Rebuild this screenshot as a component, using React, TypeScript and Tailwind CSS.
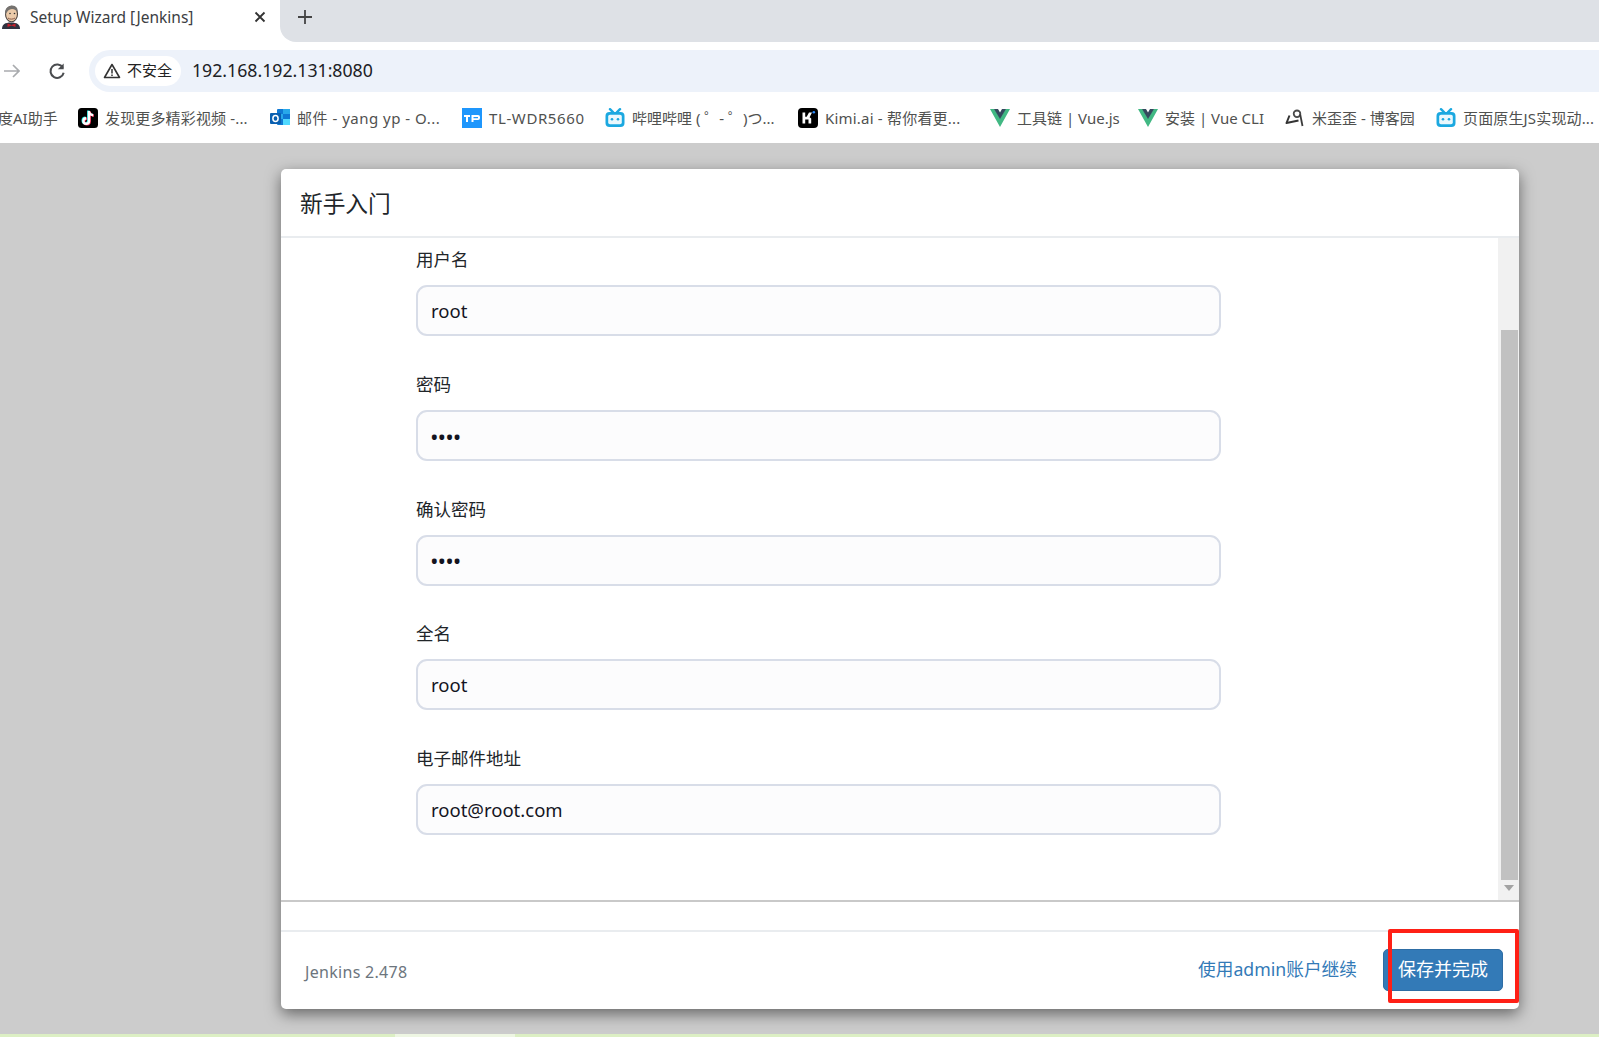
import React from "react";

const FONT = '"Noto Sans", "Noto Sans CJK SC", sans-serif';

function JenkinsIcon() {
  return (
    <svg width="20" height="24" viewBox="0 0 20 24">
      <path d="M1 24c0-4.500 3-6.500 9-6.500s9 2 9 6.500z" fill="#2f3340" />
      <ellipse cx="10.500" cy="9" rx="6" ry="7.800" fill="#eccbaa" stroke="#4f4540" strokeWidth="1.100" />
      <path d="M4.500 10C3 4 7 .5 11 .5s6.500 3 5.500 7c-1-2-3-3.500-5.500-3.500C8 4 6 6 4.500 10z" fill="#75726f" />
      <circle cx="9" cy="8.500" r=".8" fill="#333" />
      <circle cx="13.500" cy="8.500" r=".8" fill="#333" />
      <path d="M7 13c1.500 1.500 5 1.500 7 0" fill="none" stroke="#8a5a48" strokeWidth="1" />
      <path d="M6.500 18.500l4 1.500 4-1.500v3.500l-4-1.500-4 1.500z" fill="#c8202a" />
    </svg>
  );
}

function TikTok() {
  const d = "M11 3v10a2.800 2.800 0 1 1-2.800-2.800M11 3c.2 2.400 1.800 4 4.200 4.200";
  return (
    <svg width="20" height="20" viewBox="0 0 20 20">
      <rect width="20" height="20" rx="3.500" fill="#000" />
      <path d={d} fill="none" stroke="#25f4ee" strokeWidth="2.400" transform="translate(-.7 -.5)" />
      <path d={d} fill="none" stroke="#fe2c55" strokeWidth="2.400" transform="translate(.7 .5)" />
      <path d={d} fill="none" stroke="#fff" strokeWidth="2.400" />
    </svg>
  );
}

function Outlook() {
  return (
    <svg width="20" height="20" viewBox="0 0 20 20">
      <rect x="7" y="1" width="13" height="16" rx="1" fill="#0f78d4" />
      <rect x="13" y="1" width="7" height="5" fill="#28a8ea" />
      <rect x="7" y="6" width="6" height="5" fill="#28a8ea" />
      <rect x="13" y="11" width="7" height="6" fill="#50d9ff" />
      <rect x="0" y="5" width="11" height="11" rx="1" fill="#0a5fb0" />
      <ellipse cx="5.500" cy="10.500" rx="2.600" ry="3" fill="none" stroke="#fff" strokeWidth="1.500" />
    </svg>
  );
}

function TP() {
  return (
    <svg width="20" height="20" viewBox="0 0 20 20">
      <rect width="20" height="20" fill="#1e96fc" />
      <path d="M2 7h6v2H6v5H4V9H2zM9.500 7H16a2 2 0 0 1 2 2v1a2 2 0 0 1-2 2h-4.500v2h-2zm2 2v1.300H16V9z" fill="#fff" />
    </svg>
  );
}

function Bili() {
  return (
    <svg width="20" height="20" viewBox="0 0 20 20">
      <path d="M5 1.200l3.200 3.200M15 1.200l-3.200 3.200" stroke="#1ba8e0" strokeWidth="2.400" strokeLinecap="round" />
      <rect x=".5" y="4" width="19" height="15" rx="4" fill="#1ba8e0" />
      <rect x="3.200" y="6.800" width="13.600" height="9.400" rx="1.800" fill="#eaf8fd" />
      <circle cx="7" cy="11.200" r="1.300" fill="#1ba8e0" />
      <circle cx="13" cy="11.200" r="1.300" fill="#1ba8e0" />
    </svg>
  );
}

function Kimi() {
  return (
    <svg width="20" height="20" viewBox="0 0 20 20">
      <rect width="20" height="20" rx="4" fill="#000" />
      <path d="M4.500 4.500v11h2.700v-4h3.300v4h2.700v-5l-1.600-1.300L14 4.500h-3l-2.300 4.300H7.200V4.500z" fill="#fff" />
      <circle cx="15.800" cy="4.200" r="1.300" fill="#2a8cff" />
    </svg>
  );
}

function Vue() {
  return (
    <svg width="20" height="18" viewBox="0 0 20 18">
      <path d="M0 0h4.500L10 9l5.500-9H20L10 18z" fill="#41b883" />
      <path d="M4 0h4l2 3.500L12 0h4l-6 10z" fill="#35495e" />
    </svg>
  );
}

function Mi() {
  return (
    <svg width="20" height="20" viewBox="0 0 20 20" fill="none">
      <circle cx="12" cy="5.800" r="3.300" stroke="#4a4a4a" strokeWidth="1.800" />
      <path d="M15.200 6.500L17.500 18" stroke="#3a3a3a" strokeWidth="1.800" />
      <path d="M4.500 7.500L1.500 15 13.500 12.500" stroke="#333" strokeWidth="2" strokeLinejoin="round" />
    </svg>
  );
}

const bookmarks: { icon: React.ReactNode; text: string; w: string; cls: string }[] = [
  { icon: <TikTok />, text: "发现更多精彩视频 -...", w: "w-[192px]", cls: "tracking-[0.15px]" },
  { icon: <Outlook />, text: "邮件 - yang yp - O...", w: "w-[192px]", cls: "tracking-[0.5px]" },
  { icon: <TP />, text: "TL-WDR5660", w: "w-[143px]", cls: "tracking-[0.6px]" },
  { icon: <Bili />, text: "哔哩哔哩 ( ゜- ゜)つ...", w: "w-[193px]", cls: "" },
  { icon: <Kimi />, text: "Kimi.ai - 帮你看更...", w: "w-[192px]", cls: "tracking-[0.2px]" },
  { icon: <Vue />, text: "工具链 | Vue.js", w: "w-[148px]", cls: "" },
  { icon: <Vue />, text: "安装 | Vue CLI", w: "w-[147px]", cls: "" },
  { icon: <Mi />, text: "米歪歪 - 博客园", w: "w-[151px]", cls: "" },
  { icon: <Bili />, text: "页面原生JS实现动...", w: "w-[170px]", cls: "tracking-[0.15px]" },
];

function Field({ label, value, dots }: { label: string; value: string; dots?: boolean }) {
  return (
    <div className="h-[124.75px] w-[805px]">
      <div className="h-[43px] box-content pt-[9px] text-[17.5px] leading-[24px] text-[#212529]">{label}</div>
      <div className="-mt-[5px] h-[51px] rounded-[11px] border-2 border-[#d8dde8] bg-[#fcfcfd] px-[13px] flex items-center text-[18.5px] text-[#14141f]">
        {dots ? <span className="text-[17.5px] font-bold leading-none mt-[4px] tracking-[1px]">{value}</span> : value}
      </div>
    </div>
  );
}

export default function App() {
  return (
    <div className="relative w-[1599px] h-[1037px] overflow-hidden flex flex-col bg-white" style={{ fontFamily: FONT }}>
      {/* tab strip */}
      <div className="h-[42px] shrink-0 flex bg-white">
        <div className="w-[280px] shrink-0 flex items-center pl-[1px] pb-[8px] text-[#3c4043]">
          <JenkinsIcon />
          <span className="ml-[9px] mt-[1px] text-[15.5px] whitespace-nowrap">Setup Wizard [Jenkins]</span>
          <svg width="12" height="12" viewBox="0 0 12 12" className="ml-auto mr-[14px]">
            <path d="M1.500 1.500l9 9M10.500 1.500l-9 9" stroke="#333" strokeWidth="1.800" />
          </svg>
        </div>
        <div className="flex-1 bg-[#dee1e6] rounded-bl-[16px] flex items-center pl-[18px] pb-[8px]">
          <svg width="14" height="14" viewBox="0 0 14 14">
            <path d="M7 0v14M0 7h14" stroke="#444" strokeWidth="1.800" />
          </svg>
        </div>
      </div>
      {/* toolbar */}
      <div className="h-[58px] shrink-0 bg-white flex items-center pb-[1px]">
        <svg width="16" height="16" viewBox="0 0 16 16" className="ml-[4px]">
          <path d="M0 8h15M9 2l6 6-6 6" fill="none" stroke="#a9abae" strokeWidth="1.700" />
        </svg>
        <svg width="20" height="20" viewBox="0 0 24 24" className="ml-[27px]">
          <path d="M19 8a8 8 0 1 0 1 6" fill="none" stroke="#4a4c4f" strokeWidth="2.400" />
          <path d="M20 3v7h-7z" fill="#4a4c4f" />
        </svg>
        <div className="ml-[22px] flex-1 h-[42px] rounded-l-[21px] bg-[#edf2fa] flex items-center pl-[6px]">
          <div className="h-[30px] w-[86px] bg-white rounded-full flex items-center pl-[8px] gap-[6px]">
            <svg width="18" height="16" viewBox="0 0 18 16">
              <path d="M9 1.500L1.500 14.500h15z" fill="none" stroke="#333" strokeWidth="1.600" strokeLinejoin="round" />
              <path d="M9 6v4.500M9 11.500v1.500" stroke="#333" strokeWidth="1.500" />
            </svg>
            <span className="text-[15px] text-[#222] whitespace-nowrap">不安全</span>
          </div>
          <span className="ml-[11px] text-[17.7px] text-[#202124] whitespace-nowrap">192.168.192.131:8080</span>
        </div>
      </div>
      {/* bookmarks */}
      <div className="h-[43px] shrink-0 bg-white flex items-center pb-[7px] text-[15px] text-[#50514f] overflow-hidden whitespace-nowrap">
        <div className="w-[78px] shrink-0 -ml-[2px] mr-[2px]">
          <span className="whitespace-nowrap">度AI助手</span>
        </div>
        {bookmarks.map((b, i) => (
          <div key={i} className={`${b.w} shrink-0 flex items-center gap-[7px]`}>
            <span className="w-[20px] h-[20px] flex items-center justify-center shrink-0">{b.icon}</span>
            <span className={b.cls}>{b.text}</span>
          </div>
        ))}
      </div>
      {/* page */}
      <div className="flex-1 min-h-0 bg-[#cccccc] pt-[26px] pl-[281px] flex flex-col">
        <div className="w-[1238px] h-[840px] shrink-0 bg-white rounded-[5px] shadow-[0_5px_15px_rgba(0,0,0,0.5)] flex flex-col overflow-hidden">
          <div className="h-[69px] shrink-0 border-b-2 border-[#e9ecef] flex items-center pl-[19px] pt-[3px] text-[22.7px] text-[#212529]">
            新手入门
          </div>
          <div className="h-[664px] shrink-0 border-b-2 border-[#c9c9c9] flex">
            <div className="flex-1 pl-[135px]">
              <Field label="用户名" value="root" />
              <Field label="密码" value="••••" dots />
              <Field label="确认密码" value="••••" dots />
              <Field label="全名" value="root" />
              <Field label="电子邮件地址" value="root@root.com" />
            </div>
            <div className="w-[21px] shrink-0 bg-[#f1f1f1] flex flex-col items-center">
              <div className="h-[92px] shrink-0" />
              <div className="h-[550px] w-[17px] shrink-0 bg-[#c1c1c1] ml-[1px]" />
              <svg width="10" height="6" viewBox="0 0 10 6" className="mt-[5px]">
                <path d="M0 0h10L5 6z" fill="#a3a3a3" />
              </svg>
            </div>
          </div>
          <div className="h-[30px] shrink-0 border-b-2 border-[#e9ecef]" />
          <div className="flex-1 flex items-center pl-[24px] pr-[16px]">
            <span className="text-[16px] tracking-[0.3px] text-[#6c757d] mt-[2px]">Jenkins 2.478</span>
            <span className="ml-auto text-[17.7px] text-[#337ab7] mb-[2px]">使用admin账户继续</span>
            <button className="ml-[26px] w-[120px] h-[42px] rounded-[5px] bg-[#337ab7] border border-[#2e6da4] text-white text-[18px] mb-[2px]">
              保存并完成
            </button>
          </div>
        </div>
        <div className="mt-auto h-[3px] -ml-[281px] w-[1599px] flex bg-[#dcefc4]">
          <div className="ml-[395px] w-[120px] bg-[#eef6e3]" />
        </div>
      </div>
      {/* annotation */}
      <div className="absolute left-[1388px] top-[929px] w-[131px] h-[74px] border-4 border-[#ff2016] rounded-[2px]" />
    </div>
  );
}
